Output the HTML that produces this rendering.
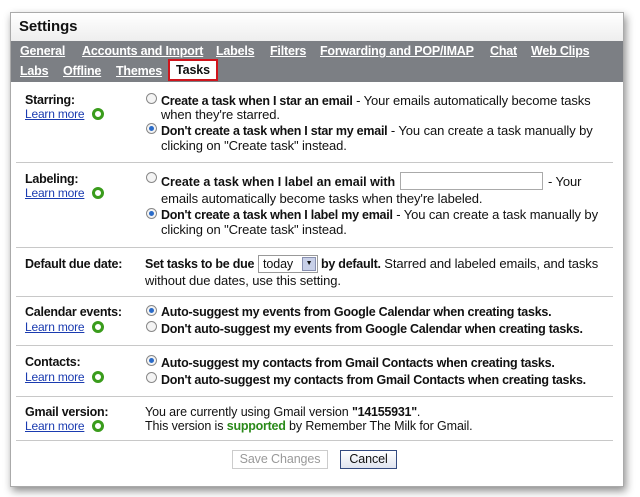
<!DOCTYPE html>
<html><head><meta charset="utf-8"><style>
body{margin:0;width:640px;height:497px;background:#fff;position:relative;overflow:hidden;font-family:"Liberation Sans",Arial,sans-serif;font-size:13px;color:#111;letter-spacing:-0.1px}
.win{position:absolute;left:10px;top:12px;width:612px;height:473px;border:1px solid #aaa;background:#fff;box-shadow:2px 4px 8px rgba(0,0,0,.45)}
.title{position:absolute;left:0;top:0;width:612px;height:28px;background:linear-gradient(#fff,#eee);font-weight:bold;font-size:15px;line-height:28px;padding-left:8px;box-sizing:border-box}
.nav{position:absolute;left:0;top:28px;width:612px;height:41px;background:#7c7f84}
.nl{position:absolute;color:#fff;font-weight:bold;text-decoration:underline;font-size:12.5px;white-space:nowrap;letter-spacing:-0.2px}
.tab{position:absolute;left:168px;top:59px;width:50px;height:22px;background:#fff;border:2px solid #d0141c;box-sizing:border-box;font-weight:bold;font-size:12.5px;text-align:center;line-height:18px}
.t{position:absolute;white-space:nowrap;line-height:14px}
.b{font-weight:bold;font-size:12.5px;letter-spacing:-0.25px}
.lm{position:absolute;color:#1a3bb0;text-decoration:underline;font-size:12px;letter-spacing:-0.2px}
.g{position:absolute;width:6px;height:6px;border:3px solid #3a9c1c;border-radius:50%;box-sizing:content-box}
.sep{position:absolute;width:597px;height:1px;background:#c8c8c8}
.r{position:absolute;width:9px;height:9px;border:1px solid #888;border-radius:50%;background:#f4f4f4}
.r.on::after{content:"";position:absolute;left:2px;top:2px;width:5px;height:5px;border-radius:50%;background:#2a6bc8}
</style></head><body>
<div class="win">
<div class="title">Settings</div>
<div class="nav"></div>
</div>
<div class="nl" style="left:20px;top:44px">General</div><div class="nl" style="left:82px;top:44px">Accounts and Import</div><div class="nl" style="left:216px;top:44px">Labels</div><div class="nl" style="left:270px;top:44px">Filters</div><div class="nl" style="left:320px;top:44px">Forwarding and POP/IMAP</div><div class="nl" style="left:490px;top:44px">Chat</div><div class="nl" style="left:531px;top:44px">Web Clips</div>
<div class="nl" style="left:20px;top:64px">Labs</div><div class="nl" style="left:63px;top:64px">Offline</div><div class="nl" style="left:116px;top:64px">Themes</div>
<div class="tab">Tasks</div>

<div class="t b" style="left:25px;top:93px">Starring:</div>
<div class="lm" style="left:25px;top:107px">Learn more</div><div class="g" style="left:92px;top:108px"></div>
<div class="r" style="left:146px;top:93px"></div>
<div class="t" style="left:161px;top:94px"><span class="b">Create a task when I star an email</span> - Your emails automatically become tasks</div>
<div class="t" style="left:161px;top:108px">when they're starred.</div>
<div class="r on" style="left:146px;top:123px"></div>
<div class="t" style="left:161px;top:124px"><span class="b">Don't create a task when I star my email</span> - You can create a task manually by</div>
<div class="t" style="left:161px;top:139px">clicking on "Create task" instead.</div>
<div class="sep" style="left:16px;top:162px"></div>

<div class="t b" style="left:25px;top:172px">Labeling:</div>
<div class="lm" style="left:25px;top:186px">Learn more</div><div class="g" style="left:92px;top:187px"></div>
<div class="r" style="left:146px;top:172px"></div>
<div class="t" style="left:161px;top:175px"><span class="b" style="letter-spacing:0">Create a task when I label an email with</span></div>
<div style="position:absolute;left:400px;top:172px;width:143px;height:18px;border:1px solid #aaa;box-sizing:border-box"></div>
<div class="t" style="left:548px;top:175px">- Your</div>
<div class="t" style="left:161px;top:192px">emails automatically become tasks when they're labeled.</div>
<div class="r on" style="left:146px;top:208px"></div>
<div class="t" style="left:161px;top:208px"><span class="b">Don't create a task when I label my email</span> - You can create a task manually by</div>
<div class="t" style="left:161px;top:223px">clicking on "Create task" instead.</div>
<div class="sep" style="left:16px;top:247px"></div>

<div class="t b" style="left:25px;top:257px">Default due date:</div>
<div class="t" style="left:145px;top:257px"><span class="b">Set tasks to be due</span></div>
<div style="position:absolute;left:258px;top:255px;width:60px;height:18px;border:1px solid #999;box-sizing:border-box;font-size:12.5px;line-height:16px;padding-left:4px">today<span style="position:absolute;right:1px;top:1px;width:14px;height:14px;background:#c8d0e8;border:1px solid #8890b0;box-sizing:border-box;font-size:7px;line-height:12px;text-align:center">▼</span></div>
<div class="t" style="left:321px;top:257px"><span class="b">by default.</span> Starred and labeled emails, and tasks</div>
<div class="t" style="left:145px;top:274px">without due dates, use this setting.</div>
<div class="sep" style="left:16px;top:296px"></div>

<div class="t b" style="left:25px;top:305px">Calendar events:</div>
<div class="lm" style="left:25px;top:320px">Learn more</div><div class="g" style="left:92px;top:321px"></div>
<div class="r on" style="left:146px;top:305px"></div>
<div class="t b" style="left:161px;top:305px">Auto-suggest my events from Google Calendar when creating tasks.</div>
<div class="r" style="left:146px;top:321px"></div>
<div class="t b" style="left:161px;top:322px">Don't auto-suggest my events from Google Calendar when creating tasks.</div>
<div class="sep" style="left:16px;top:345px"></div>

<div class="t b" style="left:25px;top:355px">Contacts:</div>
<div class="lm" style="left:25px;top:370px">Learn more</div><div class="g" style="left:92px;top:371px"></div>
<div class="r on" style="left:146px;top:355px"></div>
<div class="t b" style="left:161px;top:356px">Auto-suggest my contacts from Gmail Contacts when creating tasks.</div>
<div class="r" style="left:146px;top:372px"></div>
<div class="t b" style="left:161px;top:373px">Don't auto-suggest my contacts from Gmail Contacts when creating tasks.</div>
<div class="sep" style="left:16px;top:396px"></div>

<div class="t b" style="left:25px;top:405px">Gmail version:</div>
<div class="lm" style="left:25px;top:419px">Learn more</div><div class="g" style="left:92px;top:420px"></div>
<div class="t" style="left:145px;top:405px;font-size:12.5px">You are currently using Gmail version <span class="b">"14155931"</span>.</div>
<div class="t" style="left:145px;top:419px;font-size:12.5px">This version is <span class="b" style="color:#2a8a1a">supported</span> by Remember The Milk for Gmail.</div>
<div class="sep" style="left:16px;top:440px"></div>

<div style="position:absolute;left:232px;top:450px;width:96px;height:19px;border:1px solid #ccc;box-sizing:border-box;color:#999;text-align:center;line-height:17px;font-size:12.5px">Save Changes</div>
<div style="position:absolute;left:340px;top:450px;width:57px;height:19px;border:1px solid #334a80;box-sizing:border-box;background:linear-gradient(#fff,#dfe4f0);text-align:center;line-height:17px;font-size:12.5px">Cancel</div>
</body></html>
